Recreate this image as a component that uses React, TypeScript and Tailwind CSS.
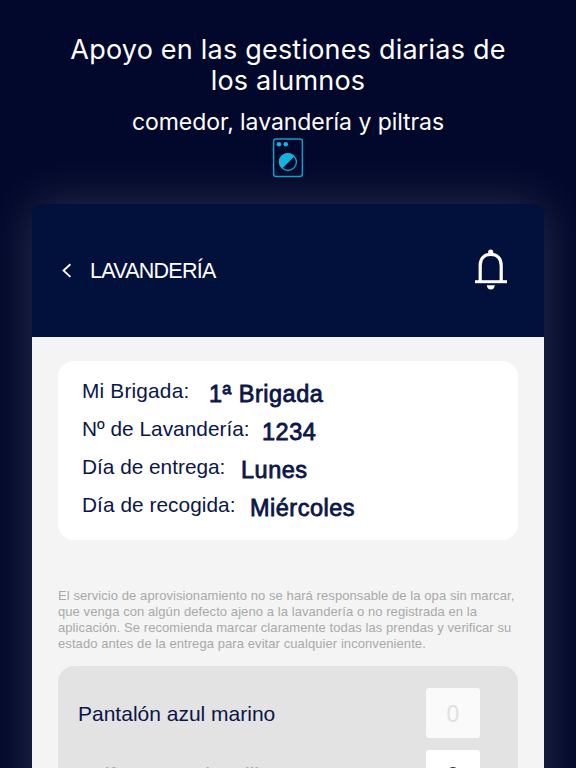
import React from 'react';

type Detail = {
  label: string;
  value: string;
  labelClass: string;
};

const details: Detail[] = [
  { label: 'Mi Brigada:', value: '1ª Brigada', labelClass: 'w-[127px] tracking-[0.2px]' },
  { label: 'Nº de Lavandería:', value: '1234', labelClass: 'w-[180px] tracking-[0.03px]' },
  { label: 'Día de entrega:', value: 'Lunes', labelClass: 'w-[159px]' },
  { label: 'Día de recogida:', value: 'Miércoles', labelClass: 'w-[168px] tracking-[0.06px]' },
];

const notice = [
  'El servicio de aprovisionamiento no se hará responsable de la opa sin marcar,',
  'que venga con algún defecto ajeno a la lavandería o no registrada en la',
  'aplicación. Se recomienda marcar claramente todas las prendas y verificar su',
  'estado antes de la entrega para evitar cualquier inconveniente.',
];

function WasherIcon() {
  return (
    <svg className="block" width="32" height="40" viewBox="0 0 32 40" fill="none">
      <rect x="1.6" y="0.9" width="28.8" height="37.6" rx="2.4" stroke="#149cc8" strokeWidth="1.5" />
      <circle cx="7" cy="6.2" r="2.3" fill="#12b4dd" />
      <circle cx="13.8" cy="6.2" r="2.3" fill="#12b4dd" />
      <circle cx="16" cy="24" r="8.4" stroke="#12b4dd" strokeWidth="1.2" />
      <path d="M22.6 18.3A8.8 8.8 0 1 0 10.2 30.6Z" fill="#12b4dd" />
    </svg>
  );
}

function BellIcon() {
  return (
    <svg className="block -translate-y-px" width="32" height="42" viewBox="0 0 32 42" fill="none">
      <circle cx="15.7" cy="3" r="2.6" fill="white" />
      <path d="M5.2 32V16.5C5.2 9.6 9.2 5.4 15.7 5.4S26.2 9.6 26.2 16.5V32" stroke="white" strokeWidth="3.2" />
      <path d="M0 32.7H32" stroke="white" strokeWidth="3" />
      <path d="M11.8 36.2H19.8C19.6 39 18 40.6 15.8 40.6S12 39 11.8 36.2Z" fill="white" />
    </svg>
  );
}

function DetailRow({ label, value, labelClass }: Detail) {
  return (
    <div className="flex h-[38px] whitespace-nowrap text-[#0a1647]">
      <span className={`shrink-0 text-[20.8px] leading-[24px] ${labelClass}`}>{label}</span>
      <span className="pt-[2px] text-[23.5px] leading-[26px] tracking-[0.5px] [-webkit-text-stroke:0.8px_#0a1647]">
        {value}
      </span>
    </div>
  );
}

export default function App() {
  return (
    <div className="flex h-[768px] w-[576px] flex-col overflow-hidden bg-[#01082b] font-['Liberation_Sans',sans-serif]">
      <header className="flex h-[204px] shrink-0 flex-col items-center pt-[34px] text-center font-['Inter',sans-serif] text-white">
        <h1 className="text-[27px] leading-[31px] tracking-[0.21px] whitespace-nowrap">
          Apoyo en las gestiones diarias de
          <br />
          los alumnos
        </h1>
        <p className="mt-[12px] text-[23px] leading-[29px] tracking-[-0.06px]">comedor, lavandería y piltras</p>
        <div className="mt-px">
          <WasherIcon />
        </div>
      </header>

      <main className="mx-8 flex h-[620px] shrink-0 flex-col overflow-hidden rounded-t-[10px] bg-[linear-gradient(#02113b_133px,#f4f4f4_133px)] shadow-[0_0_50px_0_rgba(255,255,255,0.16)]">
        <div className="flex h-[133px] shrink-0 items-center pr-[37px] pl-[30px] text-white">
          <svg className="block" width="10" height="16" viewBox="0 0 10 16" fill="none">
            <path d="M8.4 1.3L1.6 7.6L8.4 13.9" stroke="white" strokeWidth="1.9" />
          </svg>
          <span className="ml-[18px] flex-1 text-[21.5px] leading-6 tracking-[-0.75px]">LAVANDERÍA</span>
          <BellIcon />
        </div>

        <section className="mx-[26px] mt-6 h-[179px] shrink-0 rounded-[16px] bg-white pt-[18px] pl-6">
          {details.map((d) => (
            <DetailRow key={d.label} {...d} />
          ))}
        </section>

        <p className="mt-[48px] ml-[26px] shrink-0 text-[13px] leading-[16px] tracking-[0.08px] whitespace-nowrap text-[#a9a9a9]">
          {notice.map((line) => (
            <span key={line} className="block">
              {line}
            </span>
          ))}
        </p>

        <section className="mx-[26px] mt-[14px] flex-1 rounded-t-[16px] bg-[#e3e3e3] pt-[22px] pr-[38px] pl-5 text-[21px] text-[#0a1647]">
          <div className="flex h-[50px] items-center justify-between">
            <span className="pt-[2px]">Pantalón azul marino</span>
            <span className="flex h-[50px] w-[54px] items-center justify-center rounded-[3px] bg-[#fafafa] pt-[2px] text-[23px] text-[#e0e0e0]">
              0
            </span>
          </div>
          <div className="mt-3 flex h-[50px] items-center justify-between">
            <span className="text-[#a5a7b0]">Uniforme verde militar</span>
            <span className="flex h-[50px] w-[54px] items-center justify-center rounded-[3px] bg-white pt-[2px] text-[23px] text-[#333333]">
              0
            </span>
          </div>
        </section>
      </main>
    </div>
  );
}
